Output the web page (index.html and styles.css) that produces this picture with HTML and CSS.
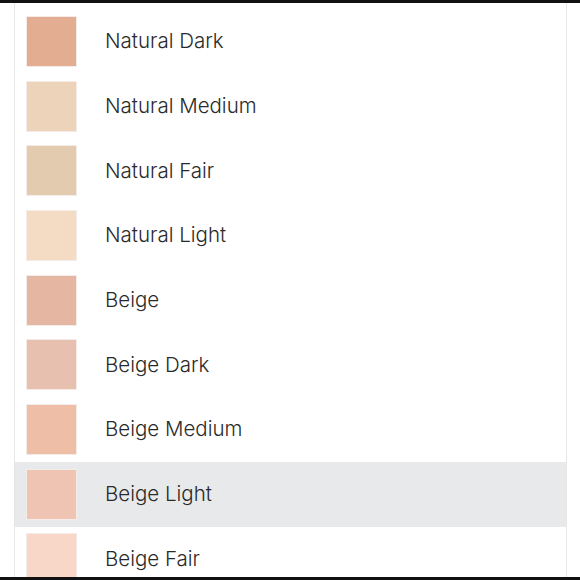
FILE: index.html
```html
<!DOCTYPE html>
<html>
<head>
<meta charset="utf-8">
<link rel="stylesheet" href="styles.css">
</head>
<body>
<div class="topbar"></div>
<div class="panel">
  <ul class="list">
    <li class="row"><span class="swatch s1"></span><span class="name">Natural Dark</span></li>
    <li class="row"><span class="swatch s2"></span><span class="name">Natural Medium</span></li>
    <li class="row"><span class="swatch s3"></span><span class="name">Natural Fair</span></li>
    <li class="row"><span class="swatch s4"></span><span class="name">Natural Light</span></li>
    <li class="row"><span class="swatch s5"></span><span class="name">Beige</span></li>
    <li class="row"><span class="swatch s6"></span><span class="name">Beige Dark</span></li>
    <li class="row"><span class="swatch s7"></span><span class="name">Beige Medium</span></li>
    <li class="row active"><span class="swatch s8"></span><span class="name">Beige Light</span></li>
    <li class="row"><span class="swatch s9"></span><span class="name">Beige Fair</span></li>
  </ul>
</div>
<div class="bottombar"></div>
</body>
</html>
```
FILE: styles.css
```css
html, body {
  margin: 0;
  padding: 0;
  height: 580px;
  overflow: hidden;
  background: #ffffff;
}
.topbar {
  height: 3px;
  background: #111;
}
.panel {
  margin: 0 13px 0 14px;
  border-left: 1px solid #e6e6e6;
  border-right: 1px solid #e6e6e6;
  height: 574px;
  overflow: hidden;
}
.list {
  list-style: none;
  margin: 0;
  padding: 6px 0 0 0;
}
.row {
  height: 64.7px;
  display: flex;
  align-items: center;
  padding-left: 11px;
  box-sizing: border-box;
}
.row.active {
  background: #e8e9eb;
}
.swatch {
  width: 49px;
  height: 49px;
  border: 1px solid #f3ece8;
  flex: none;
}
.name {
  margin-left: 28px;
  margin-top: -1px;
  font-family: "Inter", "Noto Sans", sans-serif;
  font-weight: 300;
  font-size: 20.5px;
  color: #2a2a2a;
}
.s1 { background: #e2ad90; }
.s2 { background: #ecd3b9; }
.s3 { background: #e3cbb0; }
.s4 { background: #f3dcc3; }
.s5 { background: #e5b6a2; }
.s6 { background: #e8c0b0; }
.s7 { background: #efbea7; }
.s8 { background: #efc4b3; }
.s9 { background: #f9d7c8; }
.bottombar {
  height: 3px;
  background: #111;
}
```
